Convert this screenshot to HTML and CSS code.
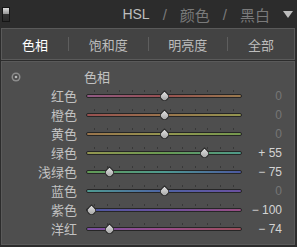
FILE: index.html
```html
<!DOCTYPE html>
<html lang="zh-CN">
<head>
  <meta charset="UTF-8">
  <meta name="viewport" content="width=device-width, initial-scale=1.0">
  <title>HSL / 颜色 / 黑白</title>
  <link rel="stylesheet" href="styles.css">
</head>
<body>
  <div class="panel">
    <!-- Cabeçalho do painel -->
    <div class="panel-header">
      <span class="collapse"></span>
      <div class="modes">
        <span class="mode-latin active">HSL</span>
        <span class="slash">/</span>
        <span class="mode">颜色</span>
        <span class="slash">/</span>
        <span class="mode">黑白</span>
        <svg class="arrow" width="10" height="7" viewBox="0 0 10 7"><path d="M0 0H10L5 7Z" fill="#bdbdbd"/></svg>
      </div>
    </div>

    <!-- Abas -->
    <div class="tabs">
      <span class="tab active">色相</span>
      <span class="sep"></span>
      <span class="tab">饱和度</span>
      <span class="sep"></span>
      <span class="tab">明亮度</span>
      <span class="sep"></span>
      <span class="tab">全部</span>
    </div>

    <!-- Controles deslizantes -->
    <div class="sliders">
      <div class="row head">
        <span class="target">
          <svg width="10" height="10" viewBox="0 0 10 10">
            <circle cx="5" cy="5" r="4.5" fill="#8c8c8c"/>
            <circle cx="5" cy="5" r="3" fill="#4c4c4c"/>
            <circle cx="5" cy="5" r="1.3" fill="#b8b8b8"/>
          </svg>
        </span>
        <span class="title">色相</span>
      </div>

      <div class="row">
        <span class="label">红色</span>
        <div class="slider" style="--v: 0">
          <div class="ticks"></div>
          <div class="track red"></div>
          <span class="thumb"></span>
        </div>
        <span class="value zero">0</span>
      </div>

      <div class="row">
        <span class="label">橙色</span>
        <div class="slider" style="--v: 0">
          <div class="ticks"></div>
          <div class="track orange"></div>
          <span class="thumb"></span>
        </div>
        <span class="value zero">0</span>
      </div>

      <div class="row">
        <span class="label">黄色</span>
        <div class="slider" style="--v: 0">
          <div class="ticks"></div>
          <div class="track yellow"></div>
          <span class="thumb"></span>
        </div>
        <span class="value zero">0</span>
      </div>

      <div class="row">
        <span class="label">绿色</span>
        <div class="slider" style="--v: 55">
          <div class="ticks"></div>
          <div class="track green"></div>
          <span class="thumb"></span>
        </div>
        <span class="value">+ 55</span>
      </div>

      <div class="row">
        <span class="label">浅绿色</span>
        <div class="slider" style="--v: -75">
          <div class="ticks"></div>
          <div class="track aqua"></div>
          <span class="thumb"></span>
        </div>
        <span class="value">− 75</span>
      </div>

      <div class="row">
        <span class="label">蓝色</span>
        <div class="slider" style="--v: 0">
          <div class="ticks"></div>
          <div class="track blue"></div>
          <span class="thumb"></span>
        </div>
        <span class="value zero">0</span>
      </div>

      <div class="row">
        <span class="label">紫色</span>
        <div class="slider" style="--v: -100">
          <div class="ticks"></div>
          <div class="track purple"></div>
          <span class="thumb"></span>
        </div>
        <span class="value">− 100</span>
      </div>

      <div class="row">
        <span class="label">洋红</span>
        <div class="slider" style="--v: -74">
          <div class="ticks"></div>
          <div class="track magenta"></div>
          <span class="thumb"></span>
        </div>
        <span class="value">− 74</span>
      </div>
    </div>
  </div>
</body>
</html>
```

FILE: styles.css
```css
body {
  margin: 0;
  background: #2c2c2c;
  font-family: "Liberation Sans", "Noto Sans CJK SC", sans-serif;
}
/* Corpo da página (fundo escuro do Lightroom) */

.panel {
  width: 297px;
  height: 247px;
  background: #2c2c2c;
}

.panel-header {
  height: 28px;
  display: flex;
  align-items: center;
  padding: 0 4px 0 2px;
}
/* Cabeçalho com ícone à esquerda e modos à direita */

.collapse {
  width: 8px;
  height: 15px;
  box-sizing: border-box;
  border: 1px solid #151515;
  background: linear-gradient(#dcdcdc, #8e8e8e 50%, #333 50%, #2a2a2a);
}

.modes {
  margin-left: auto;
  display: flex;
  align-items: center;
  gap: 13px;
  font-size: 15px;
  color: #7a7a7a;
}

.mode-latin {
  font-size: 14px;
}

.modes .active {
  color: #bebebe;
}

.tabs {
  margin-left: 1px;
  width: 294px;
  height: 32px;
  box-sizing: border-box;
  border: 1px solid #5a5a5a;
  background: #434343;
  display: flex;
  align-items: center;
  font-size: 13px;
  color: #bdbdbd;
}
/* Barra de abas (色相 / 饱和度 / 明亮度 / 全部) */

.tab {
  padding: 0 20px;
  white-space: nowrap;
}

.tab.active {
  color: #ffffff;
}

.sep {
  width: 1px;
  height: 14px;
  background: #5e5e5e;
}

.sliders {
  margin: 1px 0 0 1px;
  width: 294px;
  height: 184px;
  box-sizing: border-box;
  border: 1px solid #5a5a5a;
  background: #4e4e4e;
  padding: 5px 12px 0 0;
}
/* Área dos controles deslizantes */

.row {
  display: grid;
  grid-template-columns: 75px 160px 1fr;
  column-gap: 7px;
  align-items: center;
  height: 19px;
  font-size: 13px;
  color: #c2c2c2;
}

.target {
  padding-left: 9px;
  display: flex;
}

.label {
  text-align: right;
}

.slider {
  position: relative;
  height: 19px;
  padding-top: 4px;
  box-sizing: border-box;
}

.ticks {
  margin-left: 10px;
  width: 141px;
  height: 2px;
  margin-bottom: 2px;
  background: repeating-linear-gradient(to right, #383838 0 1px, transparent 1px 12.6px);
}
/* Marcas de escala acima da trilha */

.track {
  margin: 0 2px;
  height: 4px;
  box-sizing: border-box;
  border: 1px solid #262626;
  border-radius: 2px;
}

.thumb {
  position: absolute;
  top: 5.5px;
  left: calc(2.5px + (var(--v) + 100) * 0.73px);
  width: 9px;
  height: 9px;
  box-sizing: border-box;
  border: 1px solid #2e2e2e;
  border-radius: 50% 0 50% 50%;
  transform: rotate(-45deg);
  background: linear-gradient(to bottom left, #e2e2e2, #a0a0a0);
}
/* Controle do slider (gota apontando para cima) */

.value {
  text-align: right;
  font-size: 12px;
  color: #d4d4d4;
  white-space: nowrap;
}

.value.zero {
  color: #767676;
}

.red { background: linear-gradient(to right, #905a84, #985050 50%, #9a7a4e); }
.orange { background: linear-gradient(to right, #985050, #9a744c 50%, #949650); }
.yellow { background: linear-gradient(to right, #9a744c, #949650 50%, #74984e); }
.green { background: linear-gradient(to right, #949650, #689a52 50%, #4e9a8a); }
.aqua { background: linear-gradient(to right, #629a54, #4e9a90 50%, #4c58a0); }
.blue { background: linear-gradient(to right, #4e9a90, #4e62a4 50%, #6a50a0); }
.purple { background: linear-gradient(to right, #4c58a0, #6c50a0 50%, #9a4e84); }
.magenta { background: linear-gradient(to right, #7a50a2, #9a4e8a 50%, #9c4e5a); }
/* Gradientes de cor de cada faixa de matiz */
```
